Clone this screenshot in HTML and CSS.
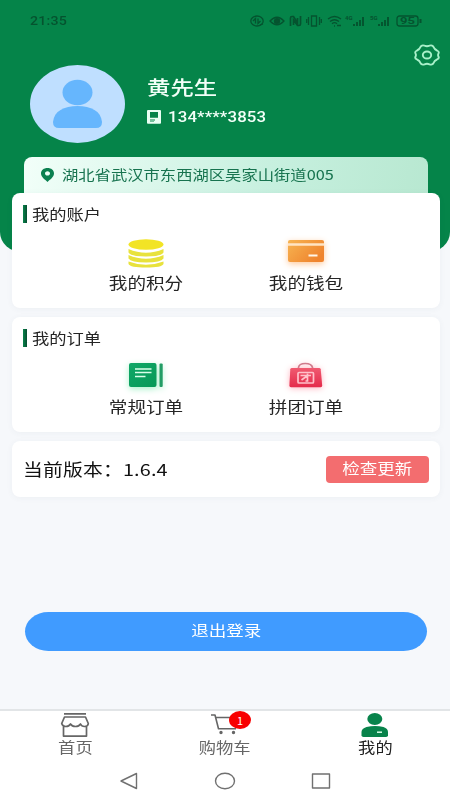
FILE: index.html
```html
<!DOCTYPE html>
<html lang="zh-CN">
<head>
<meta charset="utf-8">
<title>我的</title>
<link rel="stylesheet" href="styles.css">
</head>
<body>
<div class="app">
  <header class="hero">
    <div class="status">
      <span class="clock">21:35</span>
      <svg class="status-icons" width="174" height="14" viewBox="0 0 174 14" fill="none" stroke="currentColor" stroke-width="1.3">
        <ellipse cx="7" cy="7" rx="6.2" ry="5"/><path d="M5.500 9.500V4.500L3 7M8 4.500v5L10.500 7M10 11l3-1"/>
        <path d="M20 7q7-7.500 14 0q-7 7.500-14 0z"/><ellipse cx="27" cy="7" rx="2.600" ry="2.300" fill="currentColor"/>
        <path d="M40.500 12V4q0-1.500 1.500-1.500h1.500L47.500 9V4M50.500 2v8q0 1.500-1.500 1.500h-1.500L43.500 6v5" stroke-width="1.700"/>
        <path d="M61.500 2h5v10h-5zM58.500 3v8M69.500 3v8M56.700 5v4M71.300 5v4"/>
        <path d="M78 5q6.500-5 13 0M80 7.500q4.500-3.500 9 0M82 9.700q2.500-2 5 0M84 12h1M87 11.500h4"/>
        <path d="M104 10v2M107 8v4M110 6v6M113 3v9M129 10v2M132 8v4M135 6v6M138 3v9" stroke-width="1.900"/>
        <rect x="147" y="2" width="21" height="10" rx="2.500"/><path d="M170.500 5v4" stroke-width="2"/>
        <g class="status-text"><text x="95" y="6">4G</text><text x="120" y="6">5G</text><text class="battery" x="150" y="10.200" textLength="15" lengthAdjust="spacingAndGlyphs">95</text></g>
      </svg>
    </div>
    <div class="profile">
      <svg class="avatar" width="95" height="78" viewBox="0 0 95 78">
        <ellipse cx="47.500" cy="39" rx="47.500" ry="39" fill="#bfdfff"/>
        <ellipse cx="47.500" cy="27.500" rx="15" ry="12.700" fill="#66b6fd"/>
        <path d="M23 57C24 46 34 41 47.500 41S71 46 72 57q0 6-6 6H29q-6 0-6-6z" fill="#66b6fd"/>
      </svg>
      <div class="identity">
        <div class="name"><span class="wide">黄先生</span></div>
        <div class="phone">
          <svg width="14" height="14" viewBox="0 0 14 14"><path fill="#e9fff3" fill-rule="evenodd" d="M1 0h12q1 0 1 1v12q0 .7-1 .7H1q-1 0-1-.7V1q0-1 1-1zM3 2v5.800h8V2zM3 9.600v.8h5v-.8zM3 11.400v.7h4v-.7z"/></svg>
          <span class="wide">134****3853</span>
        </div>
      </div>
      <svg class="gear" width="26" height="22" viewBox="0 0 26 22" fill="none" stroke="#a8f0c9" stroke-width="1.900" stroke-linejoin="round">
        <path d="M7 2.200Q8.500 .8 10.500 1.700Q13 2.700 15.500 1.700Q17.500 .8 19 2.200Q20.500 5.600 23 6.500Q25.300 7.500 24.600 9.200Q23.500 11 24.600 12.800Q25.300 14.500 23 15.500Q20.500 16.400 19 19.800Q17.500 21.200 15.500 20.300Q13 19.300 10.500 20.300Q8.500 21.200 7 19.800Q5.500 16.400 3 15.500Q.7 14.500 1.400 12.800Q2.500 11 1.400 9.200Q.7 7.500 3 6.500Q5.500 5.600 7 2.200z"/>
        <ellipse cx="13" cy="11" rx="4.200" ry="3.500"/>
      </svg>
    </div>
  </header>

  <main class="content">
    <div class="address">
      <svg width="13" height="14" viewBox="0 0 13 14"><path fill="#0b8050" fill-rule="evenodd" d="M6.500 0C10.200 0 13 2.200 13 5.500C13 9 9 11.500 6.500 14C4 11.500 0 9 0 5.500C0 2.200 2.800 0 6.500 0zM6.500 3.200C5 3.200 4 4.200 4 5.400S5 7.500 6.500 7.500S9 6.600 9 5.400S8 3.200 6.500 3.200z"/></svg>
      <span class="wide">湖北省武汉市东西湖区吴家山街道005</span>
    </div>

    <section class="card">
      <h2 class="title"><span class="wide">我的账户</span></h2>
      <div class="entries">
        <div class="entry">
          <svg width="50" height="40" viewBox="0 0 50 40">
            <g fill="#e8e23c"><path d="M7.500 28.500Q25 35 42.500 28.500V31Q41 34.500 25 34.500T7.500 31z"/><path d="M7.500 22Q25 29.500 42.500 22V25.500Q40 29.500 25 29.500T7.500 25.500z"/><path d="M7.500 16Q25 23.500 42.500 16V19.500Q40 23.500 25 23.500T7.500 19.500z"/></g>
            <ellipse cx="25" cy="11.500" rx="17.500" ry="5.300" fill="#f2e425"/>
          </svg>
          <span class="wide">我的积分</span>
        </div>
        <div class="entry">
          <svg class="glow-orange" width="50" height="40" viewBox="0 0 50 40">
            <defs><linearGradient id="wallet" x1="0" y1="0" x2="1" y2=".6"><stop stop-color="#f7b451"/><stop offset="1" stop-color="#ef842e"/></linearGradient></defs>
            <rect x="7" y="7" width="36" height="22" rx="2" fill="url(#wallet)"/><path d="M7 11.500h36" stroke="#ffe5c4" stroke-width="2.400"/><path d="M27.500 22.500h9" stroke="#fff5e8" stroke-width="2"/>
          </svg>
          <span class="wide">我的钱包</span>
        </div>
      </div>
    </section>

    <section class="card">
      <h2 class="title"><span class="wide">我的订单</span></h2>
      <div class="entries">
        <div class="entry">
          <svg class="glow-green" width="50" height="40" viewBox="0 0 50 40">
            <defs><linearGradient id="order" x1="0" y1="0" x2="1" y2="1"><stop stop-color="#10a767"/><stop offset="1" stop-color="#079957"/></linearGradient></defs>
            <rect x="8" y="6" width="27.500" height="24" rx="2" fill="url(#order)"/><rect x="38.500" y="6.500" width="3.200" height="23.500" rx="1" fill="#229d65"/><path d="M14 12h16.500M14 15.500h16.500M14 19.500h10.500" stroke="#d9ffe9" stroke-width="1.700"/>
          </svg>
          <span class="wide">常规订单</span>
        </div>
        <div class="entry">
          <svg class="glow-red" width="50" height="40" viewBox="0 0 50 40">
            <defs><linearGradient id="bag" x1="0" y1="0" x2="0" y2="1"><stop stop-color="#f05a70"/><stop offset="1" stop-color="#e42b4b"/></linearGradient></defs>
            <path d="M17.500 12.500V10.500Q18 6.500 24.300 6.500T31.500 10.500v2" fill="none" stroke="#d07a8b" stroke-width="1.700"/>
            <path d="M11 11H38q1.500 0 1.700 1.300L41.200 28.500q.1 1.800-1.600 1.800H10q-1.700 0-1.600-1.800L9.300 12.300q.2-1.300 1.700-1.300z" fill="url(#bag)"/>
            <g fill="none" stroke="#ffc1ca" stroke-width="1.700"><rect x="17" y="15.500" width="15.500" height="10.500" rx="1"/><path d="M19.500 18.500h10.500M26.500 16.500v7.500h-2M26 19l-5.500 4"/></g>
          </svg>
          <span class="wide">拼团订单</span>
        </div>
      </div>
    </section>

    <section class="card version">
      <span class="wide">当前版本：1.6.4</span>
      <button class="update"><span class="wide">检查更新</span></button>
    </section>

    <button class="logout"><span class="wide">退出登录</span></button>
  </main>

  <nav class="tabs">
    <a class="tab">
      <svg width="30" height="24" viewBox="0 0 30 24" fill="none" stroke="#666" stroke-width="1.700" stroke-linejoin="round"><path d="M4 .9h22M4.500 4h21L28.300 10.500Q28 13.500 24.500 13.500Q21.500 13.500 20.500 11Q19 13.500 15.500 13.500T10.500 11Q9 13.500 5.800 13.500T1.700 10.500zM3.500 13V23.100h23V13"/></svg>
      <span class="wide">首页</span>
    </a>
    <a class="tab">
      <svg width="30" height="24" viewBox="0 0 30 24" fill="none" stroke="#666" stroke-width="1.600" stroke-linejoin="round"><path d="M1 2H5L8.500 15.800H26M6 4.500H28L25.500 13"/><circle cx="11" cy="19.500" r=".9" fill="#666"/><circle cx="23.500" cy="19.500" r=".9" fill="#666"/></svg>
      <span class="badge">1</span>
      <span class="wide">购物车</span>
    </a>
    <a class="tab active">
      <svg width="30" height="24" viewBox="0 0 30 24" fill="#08834b"><ellipse cx="14.800" cy="6" rx="7.500" ry="6"/><path d="M6.500 14q8.500-2 17 0q4.500 1.500 4.500 5v3.200q0 1.800-2 1.800H3.500q-2 0-2-1.800V19q0-3.500 5-5z"/><path d="M17 19.200h5" stroke="#d8ffe9" stroke-width="1.500"/></svg>
      <span class="wide">我的</span>
    </a>
  </nav>
  <div class="system-nav">
    <svg width="20" height="18" viewBox="0 0 20 18"><path d="M17.500 1.500v15L2 9z"/></svg>
    <svg width="22" height="18" viewBox="0 0 22 18"><ellipse cx="11" cy="9" rx="9.500" ry="7.800"/></svg>
    <svg width="20" height="18" viewBox="0 0 20 18"><rect x="1.500" y="2" width="17" height="14"/></svg>
  </div>
</div>
</body>
</html>
```
FILE: styles.css
```css
* { box-sizing: border-box; }

body {
  margin: 0;
  background: #f6f8fb;
  color: #252525;
  font-family: "Noto Sans CJK SC", sans-serif;
}

button { border: 0; padding: 0; font-family: inherit; cursor: pointer; }
svg { display: block; flex: none; }

.app { width: 450px; height: 800px; display: flex; flex-direction: column; overflow: hidden; }

.wide { display: inline-block; white-space: nowrap; transform: scaleX(1.2); transform-origin: left center; }

.hero {
  flex: none;
  height: 252px;
  background: #058449;
  border-radius: 0 0 22px 22px / 0 0 20px 20px;
}

.status {
  height: 42px;
  padding: 0 26px 0 30px;
  display: flex;
  align-items: center;
  justify-content: space-between;
  color: #05532f;
}
.clock { font-family: Roboto, sans-serif; font-size: 12px; font-weight: 500; letter-spacing: .2px; transform: scaleX(1.18); transform-origin: left center; }
.status-icons { overflow: visible; }
.status-text { fill: currentColor; stroke: none; font-family: Roboto, sans-serif; font-size: 6px; font-weight: 700; }
.battery { font-size: 9px; }

.profile { display: flex; padding: 0 10px 0 30px; }
.avatar { margin-top: 23px; }
.identity { flex: 1; margin: 31px 0 0 22px; color: #f2fff8; }
.name { height: 30px; line-height: 28px; font-size: 19.500px; font-weight: 500; }
.phone { height: 24px; margin-top: 2px; display: flex; align-items: center; gap: 7px; font-family: Roboto, sans-serif; font-size: 14px; font-weight: 500; letter-spacing: .12px; }
.gear { margin-top: 2px; }

.content { flex: 1; margin-top: -95px; padding: 0 10px 0 11.500px; }

.address {
  height: 36px;
  margin: 0 12px;
  padding: 0 0 1px 17.500px;
  display: flex;
  align-items: center;
  gap: 7.500px;
  border-radius: 8px 8px 0 0;
  background: linear-gradient(100deg, #f2fff9 0%, #c7f0df 60%, #b8e8d1 100%);
  color: #17734f;
  font-size: 13.600px;
}
.address .wide { margin-top: -2px; }

.card {
  height: 114.500px;
  margin-bottom: 9.500px;
  background: #fff;
  border-radius: 8px;
  box-shadow: 0 1px 6px rgba(65, 75, 100, .05);
  padding-top: 11px;
}
.title { display: flex; align-items: center; gap: 5px; height: 20px; margin: 0; padding-left: 11px; font-size: 14.400px; line-height: 20px; font-weight: 400; }
.title::before { content: ""; width: 4px; height: 18px; background: linear-gradient(90deg, #08834b, #064e30); }
.entries { display: flex; justify-content: center; gap: 60px; margin-top: 9px; }
.entry { width: 100px; display: flex; flex-direction: column; align-items: center; font-size: 15.500px; line-height: 22px; }
.entry .wide { margin-top: -2px; }
.entry .wide, .tab .wide, .update .wide, .logout .wide { transform-origin: center; }
.glow-orange { filter: drop-shadow(0 2px 3px #ffc99a); }
.glow-green { filter: drop-shadow(0 2px 3px #a9f2ca); }
.glow-red { filter: drop-shadow(0 1px 3px #ffb3bf); }

.version { height: 56px; padding: 0 11px 0 11.500px; display: flex; align-items: center; justify-content: space-between; color: #111; font-size: 16.500px; letter-spacing: .15px; }
.version > .wide { margin-top: -1px; }
.update { width: 103px; height: 27px; padding-bottom: 3px; border-radius: 4px; background: #f36d6f; color: #fff; font-size: 14.600px; line-height: 24px; }

.logout { display: block; width: 402px; height: 39px; padding-bottom: 3px; margin: 114.500px 0 0 13.500px; border-radius: 24px / 20px; background: #409bff; color: #fff; font-size: 14.600px; }

.tabs { flex: none; height: 52px; border-top: 2px solid #e2e5e7; background: #fff; display: flex; }
.tab { position: relative; flex: 1; display: flex; flex-direction: column; align-items: center; padding-top: 2px; color: #666; font-size: 14.400px; line-height: 20px; }
.tab.active { color: #222; }
.badge {
  position: absolute;
  left: 79px;
  top: 0;
  width: 22px;
  height: 18px;
  border-radius: 50%;
  background: #f80000;
  color: #fff;
  font-size: 11px;
  line-height: 18px;
  text-align: center;
}
.system-nav { flex: none; height: 39px; background: #fff; display: flex; justify-content: center; align-items: center; gap: 75px; fill: none; stroke: #707070; stroke-width: 1.400; stroke-linejoin: round; }
```
